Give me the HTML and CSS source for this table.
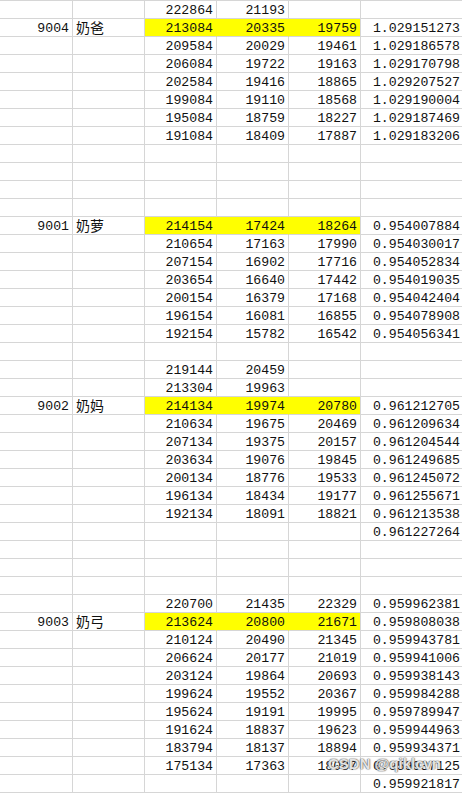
FILE: index.html
```html
<!DOCTYPE html>
<html>
<head>
<meta charset="utf-8">
<link rel="stylesheet" href="styles.css">
</head>
<body>
<div class="sheet">
<table class="grid">
<colgroup><col class="ca"><col class="cb"><col class="cc"><col class="cd"><col class="ce"><col class="cf"></colgroup>
<tr><td></td><td></td><td>222864</td><td>21193</td><td></td><td></td></tr>
<tr><td>9004</td><td class="t">奶爸</td><td class="hl">213084</td><td class="hl">20335</td><td class="hl end">19759</td><td>1.029151273</td></tr>
<tr><td></td><td></td><td>209584</td><td>20029</td><td>19461</td><td>1.029186578</td></tr>
<tr><td></td><td></td><td>206084</td><td>19722</td><td>19163</td><td>1.029170798</td></tr>
<tr><td></td><td></td><td>202584</td><td>19416</td><td>18865</td><td>1.029207527</td></tr>
<tr><td></td><td></td><td>199084</td><td>19110</td><td>18568</td><td>1.029190004</td></tr>
<tr><td></td><td></td><td>195084</td><td>18759</td><td>18227</td><td>1.029187469</td></tr>
<tr><td></td><td></td><td>191084</td><td>18409</td><td>17887</td><td>1.029183206</td></tr>
<tr><td></td><td></td><td></td><td></td><td></td><td></td></tr>
<tr><td></td><td></td><td></td><td></td><td></td><td></td></tr>
<tr><td></td><td></td><td></td><td></td><td></td><td></td></tr>
<tr><td></td><td></td><td></td><td></td><td></td><td></td></tr>
<tr><td>9001</td><td class="t">奶萝</td><td class="hl">214154</td><td class="hl">17424</td><td class="hl end">18264</td><td>0.954007884</td></tr>
<tr><td></td><td></td><td>210654</td><td>17163</td><td>17990</td><td>0.954030017</td></tr>
<tr><td></td><td></td><td>207154</td><td>16902</td><td>17716</td><td>0.954052834</td></tr>
<tr><td></td><td></td><td>203654</td><td>16640</td><td>17442</td><td>0.954019035</td></tr>
<tr><td></td><td></td><td>200154</td><td>16379</td><td>17168</td><td>0.954042404</td></tr>
<tr><td></td><td></td><td>196154</td><td>16081</td><td>16855</td><td>0.954078908</td></tr>
<tr><td></td><td></td><td>192154</td><td>15782</td><td>16542</td><td>0.954056341</td></tr>
<tr><td></td><td></td><td></td><td></td><td></td><td></td></tr>
<tr><td></td><td></td><td>219144</td><td>20459</td><td></td><td></td></tr>
<tr><td></td><td></td><td>213304</td><td>19963</td><td></td><td></td></tr>
<tr><td>9002</td><td class="t">奶妈</td><td class="hl">214134</td><td class="hl">19974</td><td class="hl end">20780</td><td>0.961212705</td></tr>
<tr><td></td><td></td><td>210634</td><td>19675</td><td>20469</td><td>0.961209634</td></tr>
<tr><td></td><td></td><td>207134</td><td>19375</td><td>20157</td><td>0.961204544</td></tr>
<tr><td></td><td></td><td>203634</td><td>19076</td><td>19845</td><td>0.961249685</td></tr>
<tr><td></td><td></td><td>200134</td><td>18776</td><td>19533</td><td>0.961245072</td></tr>
<tr><td></td><td></td><td>196134</td><td>18434</td><td>19177</td><td>0.961255671</td></tr>
<tr><td></td><td></td><td>192134</td><td>18091</td><td>18821</td><td>0.961213538</td></tr>
<tr><td></td><td></td><td></td><td></td><td></td><td>0.961227264</td></tr>
<tr><td></td><td></td><td></td><td></td><td></td><td></td></tr>
<tr><td></td><td></td><td></td><td></td><td></td><td></td></tr>
<tr><td></td><td></td><td></td><td></td><td></td><td></td></tr>
<tr><td></td><td></td><td>220700</td><td>21435</td><td>22329</td><td>0.959962381</td></tr>
<tr><td>9003</td><td class="t">奶弓</td><td class="hl">213624</td><td class="hl">20800</td><td class="hl end">21671</td><td>0.959808038</td></tr>
<tr><td></td><td></td><td>210124</td><td>20490</td><td>21345</td><td>0.959943781</td></tr>
<tr><td></td><td></td><td>206624</td><td>20177</td><td>21019</td><td>0.959941006</td></tr>
<tr><td></td><td></td><td>203124</td><td>19864</td><td>20693</td><td>0.959938143</td></tr>
<tr><td></td><td></td><td>199624</td><td>19552</td><td>20367</td><td>0.959984288</td></tr>
<tr><td></td><td></td><td>195624</td><td>19191</td><td>19995</td><td>0.959789947</td></tr>
<tr><td></td><td></td><td>191624</td><td>18837</td><td>19623</td><td>0.959944963</td></tr>
<tr><td></td><td></td><td>183794</td><td>18137</td><td>18894</td><td>0.959934371</td></tr>
<tr><td></td><td></td><td>175134</td><td>17363</td><td>18087</td><td>0.959937125</td></tr>
<tr><td></td><td></td><td></td><td></td><td></td><td>0.959921817</td></tr>
</table>
<div class="watermark">CSDN @qiklcvn</div>
</div>
</body>
</html>
```
FILE: styles.css
```css
html, body {
  margin: 0;
  padding: 0;
  background: #ffffff;
  overflow: hidden;
}

.sheet {
  position: relative;
  width: 462px;
  height: 793px;
  overflow: hidden;
}

.grid {
  border-collapse: separate;
  border-spacing: 0;
  table-layout: fixed;
  width: 464px;
  border-top: 1px solid #d6d6d6;
  font-family: "Liberation Mono", "DejaVu Sans Mono", monospace;
  font-size: 13.2px;
  color: #111;
}

.ca { width: 73px; }
.cb { width: 72px; }
.cc { width: 72px; }
.cd { width: 72px; }
.ce { width: 72px; }
.cf { width: 103px; }

.grid td {
  box-sizing: border-box;
  height: 18px;
  padding: 3px 3px 0 3px;
  line-height: 14px;
  border-right: 1px solid #d6d6d6;
  border-bottom: 1px solid #d6d6d6;
  text-align: right;
  vertical-align: top;
  white-space: nowrap;
  overflow: hidden;
}

.grid td.t {
  text-align: left;
  font-family: "Noto Sans CJK SC", sans-serif;
  font-size: 14px;
  line-height: 17px;
  padding-top: 0;
  overflow: visible;
}

.grid td.hl {
  background: #ffff00;
  border-right-color: #ffff00;
}

.grid td.hl.end {
  border-right-color: #d6d6d6;
}

.watermark {
  position: absolute;
  left: 328px;
  top: 755px;
  font-family: "Liberation Sans", sans-serif;
  font-size: 15px;
  font-weight: bold;
  color: rgba(255, 255, 255, 0.85);
  text-shadow: 0 0 1px rgba(80, 80, 80, 0.9), 0 0 1px rgba(80, 80, 80, 0.9), 0 0 2px rgba(120, 120, 120, 0.6);
  white-space: nowrap;
}
```
